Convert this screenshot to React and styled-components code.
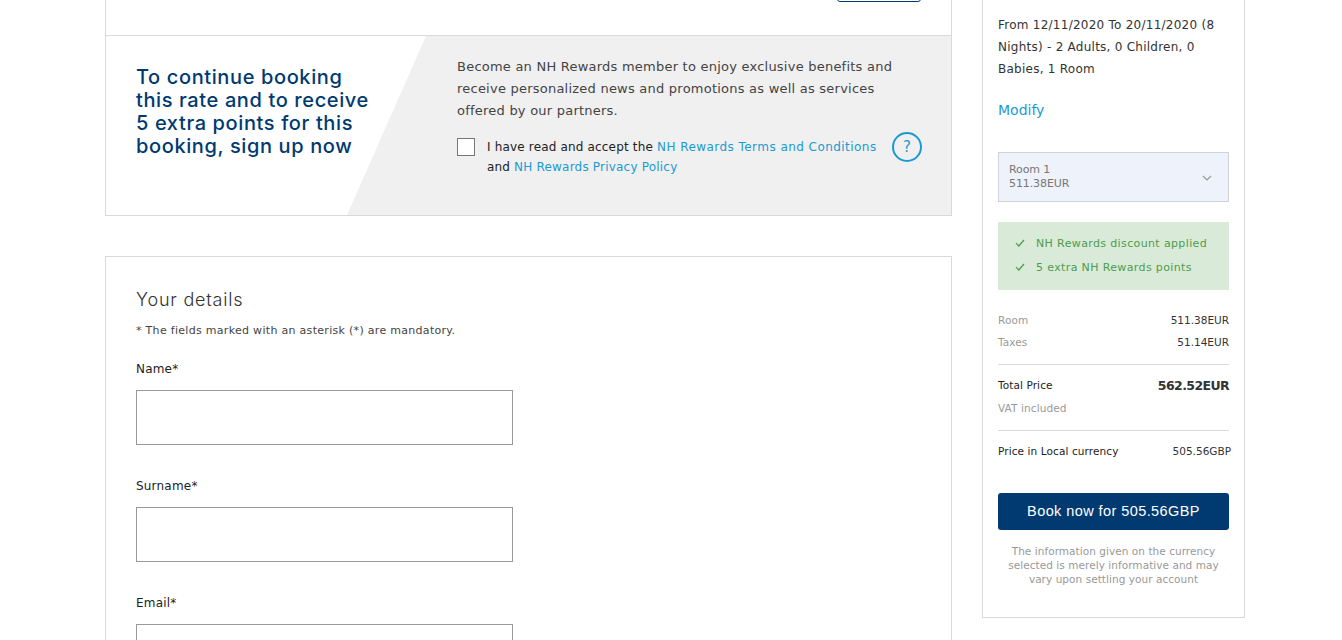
import React from 'react';
import styled, { createGlobalStyle } from 'styled-components';

const GlobalStyle = createGlobalStyle`
  html, body {
    margin: 0;
    padding: 0;
    background: #fff;
  }
  body {
    font-family: 'DejaVu Sans', Verdana, sans-serif;
    color: #333;
  }
`;

const navy = '#003a70';
const blue = '#1a9bd0';
const line = '#d9d9d9';

const Page = styled.div`
  height: 640px;
  overflow: hidden;
  display: flex;
  align-items: flex-start;
  gap: 30px;
  padding-left: 105px;
`;

const Main = styled.main`
  width: 847px;
  flex: none;
  display: flex;
  flex-direction: column;
  gap: 40px;
`;

const Card = styled.section`
  border: 1px solid ${line};
  border-top: ${props => (props.$cut ? 'none' : `1px solid ${line}`)};
  background: #fff;
`;

const TopRow = styled.div`
  height: 35px;
  display: flex;
  justify-content: flex-end;
  padding-right: 30px;
  border-bottom: 1px solid ${line};
`;

const EditButton = styled.button`
  width: 84px;
  height: 36px;
  margin-top: -34px;
  background: #fff;
  border: 1px solid ${navy};
  border-radius: 3px;
`;

const Promo = styled.div`
  position: relative;
  height: 179px;
  display: flex;
`;

const PromoShape = styled.div`
  position: absolute;
  inset: 0;
  background: #f0f0f1;
  clip-path: polygon(320px 0, 100% 0, 100% 100%, 241px 100%);
`;

const PromoTitle = styled.h2`
  position: relative;
  width: 351px;
  flex: none;
  margin: 0;
  padding: 30px 0 0 30px;
  box-sizing: border-box;
  font-family: Inter, sans-serif;
  font-weight: 500;
  font-size: 20px;
  line-height: 23px;
  letter-spacing: 0.62px;
  color: ${navy};
`;

const PromoBody = styled.div`
  position: relative;
  width: 465px;
  padding-top: 20px;
`;

const PromoText = styled.p`
  margin: 0;
  font-size: 13px;
  line-height: 22px;
  letter-spacing: 0.23px;
  white-space: nowrap;
  color: #444;
`;

const AcceptRow = styled.div`
  display: flex;
  align-items: flex-start;
  margin-top: 16px;
`;

const CheckBox = styled.span`
  width: 16px;
  height: 16px;
  flex: none;
  margin: 0 12px 0 0;
  background: #fff;
  border: 1px solid #777;
`;

const AcceptText = styled.p`
  margin: -1px 0 0;
  width: 405px;
  flex: none;
  font-size: 12px;
  line-height: 20px;
  letter-spacing: 0.17px;
  white-space: nowrap;
  color: #222;
`;

const BlueLink = styled.a`
  color: ${blue};
  text-decoration: none;
  letter-spacing: ${props => props.$spacing || 'inherit'};
`;

const HelpButton = styled.span`
  width: 26px;
  height: 26px;
  flex: none;
  margin-top: -6px;
  border: 2px solid ${blue};
  border-radius: 50%;
  display: flex;
  align-items: center;
  justify-content: center;
  color: ${blue};
  font-size: 15px;
`;

const DetailsCard = styled(Card)`
  padding: 32px 30px 0;
`;

const Title = styled.h3`
  margin: 0;
  font-family: Inter, sans-serif;
  font-weight: 300;
  font-size: 18px;
  line-height: 22px;
  letter-spacing: 0.8px;
  color: #333;
`;

const Note = styled.p`
  margin: 12px 0 0;
  font-size: 11px;
  line-height: 16px;
  letter-spacing: 0.3px;
  color: #444;
`;

const Field = styled.div`
  margin-top: ${props => (props.$first ? '22px' : '33px')};
`;

const Label = styled.label`
  display: block;
  font-size: 12px;
  line-height: 16px;
  letter-spacing: 0.2px;
  color: #222;
`;

const Input = styled.input`
  display: block;
  box-sizing: border-box;
  width: 377px;
  height: 55px;
  margin-top: 13px;
  border: 1px solid #999;
  background: #fff;
  outline: none;
`;

const Sidebar = styled.aside`
  flex: none;
  box-sizing: border-box;
  width: 263px;
  height: 618px;
  padding: 14px 15px 0;
  background: #fff;
  border: 1px solid ${line};
  border-top: none;
`;

const Stay = styled.p`
  margin: 0;
  font-size: 12px;
  line-height: 22px;
  letter-spacing: 0.25px;
  color: #333;
`;

const Modify = styled(BlueLink)`
  display: block;
  margin-top: 19px;
  font-size: 14px;
  line-height: 22px;
`;

const RoomSelect = styled.div`
  box-sizing: border-box;
  height: 50px;
  margin-top: 31px;
  padding: 10px 15px 0 10px;
  display: flex;
  align-items: flex-start;
  justify-content: space-between;
  background: #eef2fa;
  border: 1px solid #cfd3d9;
`;

const RoomLabel = styled.div`
  font-size: 11px;
  line-height: 14px;
  letter-spacing: -0.1px;
  color: #777;
`;

const Chevron = styled.svg`
  width: 10px;
  height: 6px;
  margin: 12px 1px 0 0;
  fill: none;
  stroke: #999;
  stroke-width: 1.2;
`;

const Benefits = styled.ul`
  list-style: none;
  height: 68px;
  box-sizing: border-box;
  margin: 20px 0 0;
  padding: 9px 0 0 17px;
  background: #d9ebd8;
`;

const Benefit = styled.li`
  display: flex;
  align-items: center;
  gap: 11px;
  height: 24px;
  font-size: 11px;
  letter-spacing: 0.37px;
  color: #4d9c4d;
`;

const Tick = styled.svg`
  width: 10px;
  height: 8px;
  flex: none;
  fill: none;
  stroke: #4d9c4d;
  stroke-width: 1.2;
`;

const PriceRow = styled.div`
  display: flex;
  justify-content: space-between;
  align-items: center;
  height: 22px;
  font-size: 10.5px;
  letter-spacing: 0.1px;
  color: ${props => (props.$muted ? '#999' : '#222')};
`;

const VatRow = styled(PriceRow)`
  margin-top: 1px;
`;

const Amount = styled.span`
  color: #333;
  font-size: ${props => (props.$big ? '12.5px' : '10.5px')};
  font-weight: ${props => (props.$big ? 700 : 400)};
  letter-spacing: ${props => (props.$big ? '-0.6px' : '0')};
  margin-right: ${props => (props.$over ? '-2px' : '0')};
`;

const Prices = styled.div`
  margin-top: 19px;
`;

const Divider = styled.hr`
  border: none;
  height: 1px;
  background: ${line};
  margin: ${props => props.$m || '0'};
`;

const BookButton = styled.button`
  display: block;
  width: 100%;
  height: 37px;
  margin-top: 31px;
  padding: 0 0 2px;
  border: none;
  border-radius: 3px;
  background: ${navy};
  color: #fff;
  font-family: 'Liberation Sans', Arial, sans-serif;
  font-size: 14.5px;
  letter-spacing: 0.42px;
`;

const Disclaimer = styled.p`
  margin: 14px 0 0;
  text-align: center;
  font-size: 10.5px;
  line-height: 14px;
  letter-spacing: 0.05px;
  color: #999;
`;

const TickIcon = () => (
  <Tick viewBox="0 0 10 8">
    <path d="M1 4.2 3.8 7 9 1" />
  </Tick>
);

const fields = ['Name*', 'Surname*', 'Email*'];

const App = () => (
  <>
    <GlobalStyle />
    <Page>
      <Main>
        <Card $cut>
          <TopRow>
            <EditButton aria-label="Edit" />
          </TopRow>
          <Promo>
            <PromoShape />
            <PromoTitle>
              To continue booking<br />
              this rate and to receive<br />
              5 extra points for this<br />
              booking, sign up now
            </PromoTitle>
            <PromoBody>
              <PromoText>
                Become an NH Rewards member to enjoy exclusive benefits and<br />
                receive personalized news and promotions as well as services<br />
                offered by our partners.
              </PromoText>
              <AcceptRow>
                <CheckBox />
                <AcceptText>
                  I have read and accept the <BlueLink href="#" $spacing="0.45px">NH Rewards Terms and Conditions</BlueLink><br />
                  and <BlueLink href="#" $spacing="0.2px">NH Rewards Privacy Policy</BlueLink>
                </AcceptText>
                <HelpButton>?</HelpButton>
              </AcceptRow>
            </PromoBody>
          </Promo>
        </Card>
        <DetailsCard>
          <Title>Your details</Title>
          <Note>* The fields marked with an asterisk (*) are mandatory.</Note>
          {fields.map((name, i) => (
            <Field key={name} $first={i === 0}>
              <Label>{name}</Label>
              <Input />
            </Field>
          ))}
        </DetailsCard>
      </Main>
      <Sidebar>
        <Stay>
          From 12/11/2020 To 20/11/2020 (8<br />
          Nights) - 2 Adults, 0 Children, 0<br />
          Babies, 1 Room
        </Stay>
        <Modify href="#">Modify</Modify>
        <RoomSelect>
          <RoomLabel>Room 1<br />511.38EUR</RoomLabel>
          <Chevron viewBox="0 0 10 6">
            <path d="M1 1 5 5 9 1" />
          </Chevron>
        </RoomSelect>
        <Benefits>
          <Benefit><TickIcon />NH Rewards discount applied</Benefit>
          <Benefit><TickIcon />5 extra NH Rewards points</Benefit>
        </Benefits>
        <Prices>
          <PriceRow $muted>Room<Amount>511.38EUR</Amount></PriceRow>
          <PriceRow $muted>Taxes<Amount>51.14EUR</Amount></PriceRow>
          <Divider $m="11px 0 9px" />
          <PriceRow>Total Price<Amount $big>562.52EUR</Amount></PriceRow>
          <VatRow $muted>VAT included</VatRow>
          <Divider $m="11px 0 9px" />
          <PriceRow>Price in Local currency<Amount $over>505.56GBP</Amount></PriceRow>
        </Prices>
        <BookButton>Book now for 505.56GBP</BookButton>
        <Disclaimer>
          The information given on the currency<br />
          selected is merely informative and may<br />
          vary upon settling your account
        </Disclaimer>
      </Sidebar>
    </Page>
  </>
);

export default App;
